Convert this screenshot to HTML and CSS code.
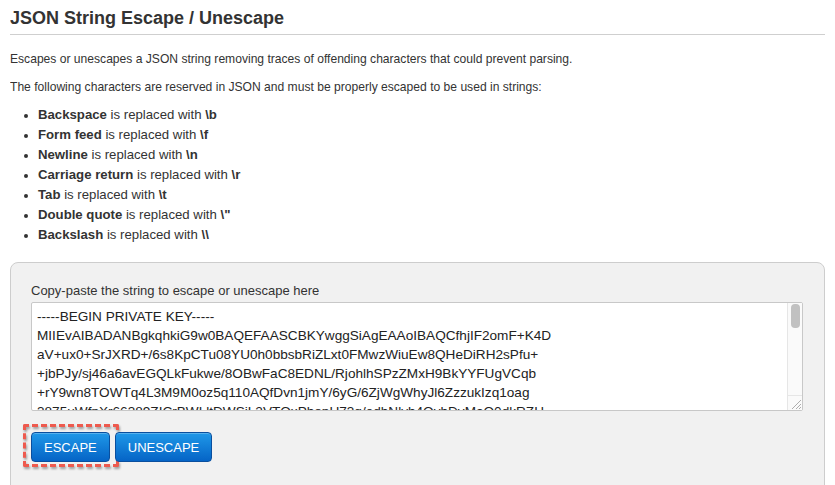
FILE: index.html
```html
<!DOCTYPE html>
<html>
<head>
<meta charset="utf-8">
<link rel="stylesheet" href="styles.css">
</head>
<body>
<h2 class="title">JSON String Escape / Unescape</h2>
<p class="text">Escapes or unescapes a JSON string removing traces of offending characters that could prevent parsing.</p>
<p class="text">The following characters are reserved in JSON and must be properly escaped to be used in strings:</p>
<ul class="list">
<li><b>Backspace</b> is replaced with <b>\b</b></li>
<li><b>Form feed</b> is replaced with <b>\f</b></li>
<li><b>Newline</b> is replaced with <b>\n</b></li>
<li><b>Carriage return</b> is replaced with <b>\r</b></li>
<li><b>Tab</b> is replaced with <b>\t</b></li>
<li><b>Double quote</b> is replaced with <b>\"</b></li>
<li><b>Backslash</b> is replaced with <b>\\</b></li>
</ul>
<div class="panel">
<label class="label" for="input">Copy-paste the string to escape or unescape here</label>
<div class="field">
<textarea id="input" class="input">-----BEGIN PRIVATE KEY-----
MIIEvAIBADANBgkqhkiG9w0BAQEFAASCBKYwggSiAgEAAoIBAQCfhjIF2omF+K4D
aV+ux0+SrJXRD+/6s8KpCTu08YU0h0bbsbRiZLxt0FMwzWiuEw8QHeDiRH2sPfu+
+jbPJy/sj46a6avEGQLkFukwe/8OBwFaC8EDNL/RjohlhSPzZMxH9BkYYFUgVCqb
+rY9wn8TOWTq4L3M9M0oz5q110AQfDvn1jmY/6yG/6ZjWgWhyJl6ZzzukIzq1oag
3875uWfpXr66389ZICrBWLltDWSiL2VTQxPhopU73g/edbNlyh4QvbDvMaQ0dkRZH
kVx0Pz1n5QbY3b8cJf2GhTq7R9mLwE4sN6aUoYi0dXcK3pZlA7ve5tHbMjFqWrS2
Yb7Kd0qLm3Nf8TzXc1Wp4Ru9Gs6Vh2Ej5Oa0Bi3Ct7Dl8Fm1Gn4Ho9Ip2Jq5Kr6L
s7Mt0Nu3Ov6Pw9Qx2Ry5Sz8T0a3Ub6Vc9Wd2Xe5Yf8Zg1ah4bi7cj0dk3el6fm9gn
2ho5ip8jq1kr4ls7mt0nu3ov6pw9qx2ry5sz8t0a3ub6vc9wd2xe5yf8zg1Ah4Bi
7Cj0Dk3El6Fm9Gn2Ho5Ip8Jq1Kr4Ls7Mt0Nu3Ov6Pw9Qx2Ry5Sz8T0a3Ub6Vc9Wd
2Xe5Yf8Zg1ah4bi7cj0dk3el6fm9gn2ho5ip8jq1kr4ls7mt0nu3ov6pw9qx2ry5s
z8t0a3ub6vc9wd2xe5yf8zg1Ah4Bi7Cj0Dk3El6Fm9Gn2Ho5Ip8Jq1Kr4Ls7Mt0N
u3Ov6Pw9Qx2Ry5Sz8T0a3Ub6Vc9Wd2Xe5Yf8Zg1ah4bi7cj0dk3el6fm9gn2ho5ip
8jq1kr4ls7mt0nu3ov6pw9qx2ry5sz8t0a3ub6vc9wd2xe5yf8zg1Ah4Bi7Cj0Dk
3El6Fm9Gn2Ho5Ip8Jq1Kr4Ls7Mt0Nu3Ov6Pw9Qx2Ry5Sz8T0a3Ub6Vc9Wd2Xe5Yf
8Zg1ah4bi7cj0dk3el6fm9gn2ho5ip8jq1kr4ls7mt0nu3ov6pw9qx2ry5sz8t0a3
ub6vc9wd2xe5yf8zg1Ah4Bi7Cj0Dk3El6Fm9Gn2Ho5Ip8Jq1Kr4Ls7Mt0Nu3Ov6P
w9Qx2Ry5Sz8T0a3Ub6Vc9Wd2Xe5Yf8Zg1ah4bi7cj0dk3el6fm9gn2ho5ip8jq1kr
4ls7mt0nu3ov6pw9qx2ry5sz8t0a3ub6vc9wd2xe5yf8zg1Ah4Bi7Cj0Dk3El6Fm
9Gn2Ho5Ip8Jq1Kr4Ls7Mt0Nu3Ov6Pw9Qx2Ry5Sz8T0a3Ub6Vc9Wd2Xe5Yf8Zg1ah
4bi7cj0dk3el6fm9gn2ho5ip8jq1kr4ls7mt0nu3ov6pw9qx2ry5sz8t0a3ub6vc
9wd2xe5yf8zg1Ah4Bi7Cj0Dk3El6Fm9Gn2Ho5Ip8Jq1Kr4Ls7Mt0Nu3Ov6Pw9Qx2
Ry5Sz8T0a3Ub6Vc9Wd2Xe5Yf8Zg1ah4bi7cj0dk3el6fm9gn2ho5ip8jq1kr4ls7m
t0nu3ov6pw9qx2ry5sz8t0a3ub6vc9wd2xe5yf8zg1Ah4Bi7Cj0Dk3El6Fm9Gn==
-----END PRIVATE KEY-----</textarea>
<div class="scrollbar" aria-hidden="true">
<div class="scroll-track"><div class="scroll-thumb"></div></div>
<div class="scroll-corner">
<svg width="14" height="14" viewBox="0 0 14 14"><path d="M13 4 L4 13 M13 8 L8 13 M13 11 L11 13" stroke="#9a9a9a" stroke-width="0.8" fill="none"/></svg>
</div>
</div>
</div>
<div class="actions">
<button class="btn btn-marked">ESCAPE</button>
<button class="btn">UNESCAPE</button>
</div>
</div>
</body>
</html>
```
FILE: styles.css
```css
html, body {
  background: #fff;
}
body {
  margin: 0 10px;
  font-family: "Liberation Sans", Arial, Helvetica, sans-serif;
  color: #333;
  font-size: 12px;
  overflow: hidden;
}
.title {
  margin: 7px 0 14px;
  padding-bottom: 5px;
  font-size: 18px;
  line-height: 22px;
  font-weight: bold;
  color: #333;
  border-bottom: 1px solid #cfcfcf;
}
.text {
  margin: 0 0 8px;
  line-height: 20px;
  font-size: 12.1px;
}
.list {
  margin: 0 0 17px;
  padding-left: 28px;
  line-height: 20px;
  font-size: 13.2px;
}
.list li::marker {
  font-size: 12px;
}
.list b {
  font-weight: bold;
}
.panel {
  background: #f1f1f1;
  border: 1px solid #cdcdcd;
  border-radius: 8px;
  padding: 20px 21px 40px 20px;
}
.label {
  display: block;
  font-size: 13px;
  line-height: 16px;
  margin-bottom: 3px;
  color: #333;
}
.field {
  position: relative;
}
.input {
  display: block;
  box-sizing: border-box;
  width: 100%;
  height: 109px;
  margin: 0;
  padding: 4px 20px 4px 5px;
  border: 1px solid #c8c8c8;
  border-radius: 2px;
  background: #fff;
  font-family: "Liberation Sans", Arial, Helvetica, sans-serif;
  font-size: 13.6px;
  line-height: 19px;
  color: #222;
  white-space: pre;
  overflow: hidden;
  resize: none;
}
.scrollbar {
  position: absolute;
  top: 1px;
  right: 1px;
  bottom: 1px;
  width: 14px;
  display: flex;
  flex-direction: column;
  background: #fafafa;
  border-left: 1px solid #e6e6e6;
}
.scroll-track {
  flex: 1;
  padding: 1px 2px 0 3px;
}
.scroll-thumb {
  height: 24px;
  background: #c1c1c1;
  border-radius: 4px;
}
.scroll-corner {
  height: 14px;
  border-top: 1px solid #e6e6e6;
  line-height: 0;
}
.actions {
  display: flex;
  gap: 5px;
  margin-top: 21px;
}
.btn {
  position: relative;
  height: 30px;
  padding: 0 12px;
  border: 1px solid #0a4f9e;
  border-radius: 4px;
  background: linear-gradient(#1f98e8, #0564c6);
  color: #fff;
  font-family: "Liberation Sans", Arial, Helvetica, sans-serif;
  font-size: 13px;
  box-shadow: inset 0 1px 0 rgba(255,255,255,0.25);
}
.btn-marked::after {
  content: "";
  position: absolute;
  left: -9px;
  top: -9px;
  right: -10px;
  bottom: -6px;
  border: 3px dashed #ee5a4e;
  border-radius: 2px;
  filter: drop-shadow(1px 2px 1px rgba(0,0,0,0.35));
}
```
